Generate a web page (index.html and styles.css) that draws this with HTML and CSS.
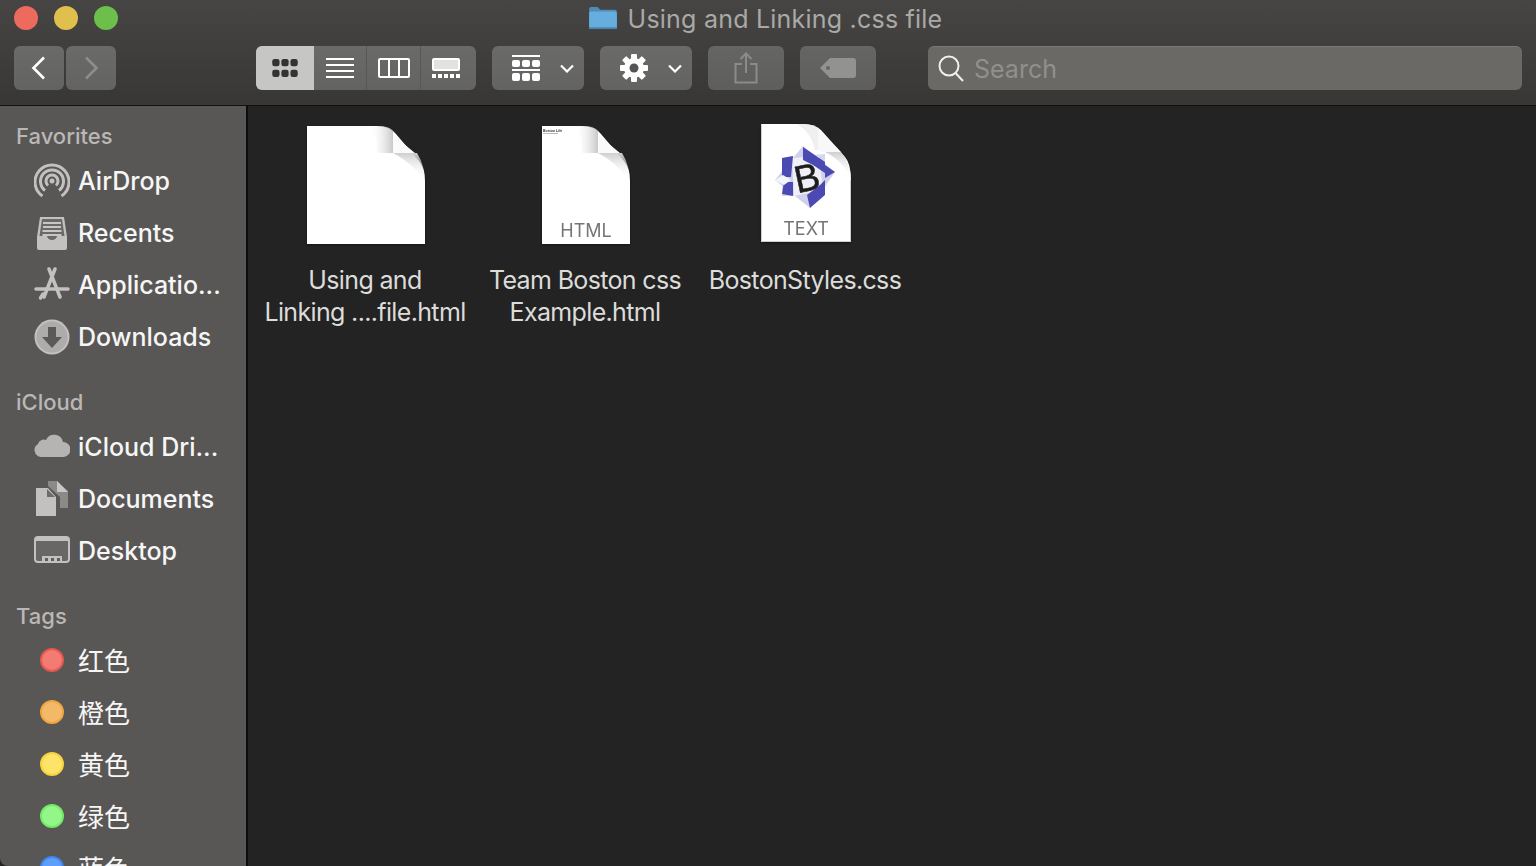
FILE: index.html
```html
<!DOCTYPE html>
<html lang="en">
<head>
    <meta charset="UTF-8">
    <meta name="viewport" content="width=device-width, initial-scale=1.0">
    <title>Using and Linking .css file</title>
    <link rel="stylesheet" href="styles.css">
</head>
<body>
    <div class="window">
        <header class="titlebar">
            <div class="title-row">
                <div class="lights">
                    <span class="light light-red"></span>
                    <span class="light light-yellow"></span>
                    <span class="light light-green"></span>
                </div>
                <div class="title">
                    <svg class="folder" width="30" height="24" viewBox="0 0 32 26">
                        <path d="M1 3a2 2 0 0 1 2-2h7l3 3h16a2 2 0 0 1 2 2v17a2 2 0 0 1-2 2H3a2 2 0 0 1-2-2z" fill="#4f8db8"/>
                        <path d="M1 8a2 2 0 0 1 2-2h26a2 2 0 0 1 2 2v15a2 2 0 0 1-2 2H3a2 2 0 0 1-2-2z" fill="#66aedd"/>
                        <rect x="1" y="23" width="30" height="2" fill="#4a86ad"/>
                    </svg>
                    <span class="title-text">Using and Linking .css file</span>
                </div>
            </div>
            <div class="tools">
                <div class="nav">
                    <button class="btn nav-btn">
                        <svg width="16" height="24" viewBox="0 0 16 24"><path d="M13 1.500 2.500 12 13 22.500" fill="none" stroke="#fff" stroke-width="2.600"/></svg>
                    </button>
                    <button class="btn nav-btn">
                        <svg width="16" height="24" viewBox="0 0 16 24"><path d="M3 1.500 13.500 12 3 22.500" fill="none" stroke="#8d8d8b" stroke-width="2.600"/></svg>
                    </button>
                </div>
                <div class="views">
                    <button class="view view-on">
                        <svg width="28" height="20" viewBox="0 0 30 22" fill="#333">
                            <rect x="1" y="1" width="8" height="8" rx="2.500"/><rect x="11" y="1" width="8" height="8" rx="2.500"/><rect x="21" y="1" width="8" height="8" rx="2.500"/>
                            <rect x="1" y="13" width="8" height="8" rx="2.500"/><rect x="11" y="13" width="8" height="8" rx="2.500"/><rect x="21" y="13" width="8" height="8" rx="2.500"/>
                        </svg>
                    </button>
                    <button class="view view-list">
                        <svg width="28" height="20" viewBox="0 0 28 20" fill="#fff">
                            <rect y="0" width="28" height="2"/><rect y="6" width="28" height="2"/><rect y="12" width="28" height="2"/><rect y="18" width="28" height="2"/>
                        </svg>
                    </button>
                    <button class="view view-cols">
                        <svg width="32" height="20" viewBox="0 0 32 20" fill="none" stroke="#fff" stroke-width="2">
                            <rect x="1" y="1" width="30" height="18" rx="1"/><path d="M11 1v18M21 1v18"/>
                        </svg>
                    </button>
                    <button class="view view-cover">
                        <svg width="28" height="20" viewBox="0 0 28 20">
                            <rect x="1" y="1" width="26" height="11" rx="1" fill="#e2e2e0" stroke="#fff" stroke-width="2"/>
                            <g fill="#fff"><rect y="16" width="4" height="4"/><rect x="6" y="16" width="4" height="4"/><rect x="12" y="16" width="4" height="4"/><rect x="18" y="16" width="4" height="4"/><rect x="24" y="16" width="4" height="4"/></g>
                        </svg>
                    </button>
                </div>
                <button class="btn menu-btn">
                    <svg width="28" height="26" viewBox="0 0 28 26" fill="#fff">
                        <rect width="28" height="2" y="0"/>
                        <rect x="0" y="5" width="8" height="7" rx="2"/><rect x="10" y="5" width="8" height="7" rx="2"/><rect x="20" y="5" width="8" height="7" rx="2"/>
                        <rect width="28" height="2" y="14"/>
                        <rect x="0" y="18" width="8" height="8" rx="2"/><rect x="10" y="18" width="8" height="8" rx="2"/><rect x="20" y="18" width="8" height="8" rx="2"/>
                    </svg>
                    <svg class="chev" width="14" height="9" viewBox="0 0 14 9"><path d="M1 1.500 7 7.500 13 1.500" fill="none" stroke="#fff" stroke-width="2.200"/></svg>
                </button>
                <button class="btn menu-btn">
                    <svg width="28" height="28" viewBox="0 0 28 28" fill="#fff">
                        <g>
                            <rect x="11" y="0" width="6" height="28" rx="1"/>
                            <rect x="11" y="0" width="6" height="28" rx="1" transform="rotate(45 14 14)"/>
                            <rect x="11" y="0" width="6" height="28" rx="1" transform="rotate(90 14 14)"/>
                            <rect x="11" y="0" width="6" height="28" rx="1" transform="rotate(135 14 14)"/>
                        </g>
                        <circle cx="14" cy="14" r="10"/>
                        <circle cx="14" cy="14" r="4.500" fill="#555"/>
                    </svg>
                    <svg class="chev" width="14" height="9" viewBox="0 0 14 9"><path d="M1 1.500 7 7.500 13 1.500" fill="none" stroke="#fff" stroke-width="2.200"/></svg>
                </button>
                <button class="btn plain-btn">
                    <svg width="24" height="32" viewBox="0 0 24 32" fill="none" stroke="#8b8b89" stroke-width="2">
                        <path d="M8 12H1.500v18.500h21V12H16M12 21V2M6.500 7 12 1.500 17.500 7"/>
                    </svg>
                </button>
                <button class="btn plain-btn">
                    <svg width="36" height="20" viewBox="0 0 36 20">
                        <path d="M10 0h23a3 3 0 0 1 3 3v14a3 3 0 0 1-3 3H10L0 10z" fill="#929290"/>
                        <circle cx="8" cy="10" r="2" fill="#666"/>
                    </svg>
                </button>
                <div class="search">
                    <svg width="26" height="28" viewBox="0 0 26 28" fill="none" stroke="#f0f0ee" stroke-width="2">
                        <circle cx="11" cy="11" r="9.500"/><path d="M17.500 18 25 26"/>
                    </svg>
                    <span>Search</span>
                </div>
            </div>
        </header>
        <div class="body">
            <aside class="sidebar">
                <h2 class="side-head">Favorites</h2>
                <div class="side-row">
                    <svg class="side-icon" viewBox="0 0 36 36" fill="none" stroke="#c2c1bf" stroke-width="3">
                        <path d="M8.500 33A17 17 0 1 1 27.500 33"/>
                        <path d="M11 27.500A11.500 11.500 0 1 1 25 27.500"/>
                        <path d="M14 22.500A6 6 0 1 1 22 22.500"/>
                        <circle cx="18" cy="18" r="2.500" fill="#c2c1bf" stroke="none"/>
                    </svg>
                    <span>AirDrop</span>
                </div>
                <div class="side-row">
                    <svg class="side-icon" viewBox="0 0 36 36">
                        <path d="M6 2h24l3 20v11a2 2 0 0 1-2 2H5a2 2 0 0 1-2-2V22z" fill="#c2c1bf"/>
                        <path d="M8 4h20l2.500 17H23a5 4 0 0 1-10 0H5.500z" fill="#6a6967"/>
                        <path d="M9 8h18M9 12h18M8.500 16h19" stroke="#c8c7c5" stroke-width="2"/>
                        <path d="M8.500 20h19" stroke="#c8c7c5" stroke-width="2"/>
                    </svg>
                    <span>Recents</span>
                </div>
                <div class="side-row">
                    <svg class="side-icon" viewBox="0 0 36 36" fill="none" stroke="#c2c1bf" stroke-linecap="round">
                        <path d="M15 2l11 28M21 2 10 30" stroke-width="3.500"/>
                        <path d="M2 22h32" stroke-width="3.500"/>
                        <path d="M6.500 31 9 27" stroke-width="3.500"/>
                    </svg>
                    <span>Applicatio...</span>
                </div>
                <div class="side-row">
                    <svg class="side-icon" viewBox="0 0 36 36">
                        <circle cx="18" cy="18" r="17.500" fill="#c2c1bf"/>
                        <circle cx="18" cy="18" r="15.500" fill="#adacaa"/>
                        <path d="M14 8h8v10h6L18 29 8 18h6z" fill="#5a5957"/>
                    </svg>
                    <span>Downloads</span>
                </div>

                <h2 class="side-head side-head-gap">iCloud</h2>
                <div class="side-row">
                    <svg class="side-icon" viewBox="0 0 36 36">
                        <path d="M7 28A7 7 0 0 1 4 15a6 6 0 0 1 8-4A9 9 0 0 1 29 13a7.500 7.500 0 0 1 0 15z" fill="#b5b4b2"/>
                    </svg>
                    <span>iCloud Dri...</span>
                </div>
                <div class="side-row">
                    <svg class="side-icon" viewBox="0 0 36 36">
                        <path d="M14 0h9l11 10v17h-8V16L14 5z" fill="#8b8a88"/>
                        <path d="M23 0l11 11H23z" fill="#c8c7c5"/>
                        <path d="M2 7h12l8 9v19H2z" fill="#c2c1bf"/>
                        <path d="M13 8l8 8h-8z" fill="#6d6c6a"/>
                    </svg>
                    <span>Documents</span>
                </div>
                <div class="side-row">
                    <svg class="side-icon" viewBox="0 0 36 36">
                        <rect x="1" y="4" width="34" height="25" rx="3" fill="#686765" stroke="#c2c1bf" stroke-width="2"/>
                        <rect x="2" y="5" width="32" height="3" fill="#c2c1bf"/>
                        <rect x="8" y="23" width="20" height="7" fill="#c2c1bf"/>
                        <path d="M11 25h3v3h-3zM17 25h3v3h-3zM23 25h3v3h-3z" fill="#5f5e5c"/>
                    </svg>
                    <span>Desktop</span>
                </div>

                <h2 class="side-head side-head-gap">Tags</h2>
                <div class="side-row tag-row"><span class="tag tag-red"></span><span class="cjk">红色</span></div>
                <div class="side-row tag-row"><span class="tag tag-orange"></span><span class="cjk">橙色</span></div>
                <div class="side-row tag-row"><span class="tag tag-yellow"></span><span class="cjk">黄色</span></div>
                <div class="side-row tag-row"><span class="tag tag-green"></span><span class="cjk">绿色</span></div>
                <div class="side-row tag-row"><span class="tag tag-blue"></span><span class="cjk">蓝色</span></div>
            </aside>
            <main class="files">
                <div class="file">
                    <div class="file-icon">
                        <svg width="118" height="118" viewBox="0 0 118 118">
                            <defs>
                                <linearGradient id="curl2" x1="0" y1="0" x2="0" y2="1">
                                    <stop offset="0" stop-color="#cfcfcf"/><stop offset="1" stop-color="#fff" stop-opacity="0"/>
                                </linearGradient>
                                <linearGradient id="curl3" x1="0" y1="0" x2="1" y2="0">
                                    <stop offset="0" stop-color="#fff" stop-opacity="0"/><stop offset="1" stop-color="#c8c8c8"/>
                                </linearGradient>
                            </defs>
                            <path d="M0 0H70Q82 0 89 8L112 35Q118 42 118 55V118H0Z" fill="#fff"/>
                            <path d="M62 0H72Q82 0 86 5V27H70Q72 10 62 0Z" fill="url(#curl3)"/>
                            <path d="M86 27H110Q118 40 118 55Q104 36 86 27Z" fill="url(#curl2)"/>
                            <path d="M86 9 108 27H88Q86 27 86 25Z" fill="#fafafa"/>
                        </svg>
                    </div>
                    <p class="file-name">Using and<br>Linking ....file.html</p>
                </div>
                <div class="file">
                    <div class="file-icon">
                        <svg width="88" height="118" viewBox="0 0 88 118">
                            <path d="M0 0H40Q52 0 59 8L82 35Q88 42 88 55V118H0Z" fill="#fff"/>
                            <path d="M32 0H42Q52 0 56 5V27H40Q42 10 32 0Z" fill="url(#curl3)"/>
                            <path d="M56 27H80Q88 40 88 55Q74 36 56 27Z" fill="url(#curl2)"/>
                            <path d="M56 9 78 27H58Q56 27 56 25Z" fill="#fafafa"/>
                            <text x="1" y="5.500" class="thumb-title">Boston Life</text>
                            <rect x="1" y="7" width="15" height="1" fill="#bbb"/>
                            <text x="44" y="111" class="doc-label">HTML</text>
                        </svg>
                    </div>
                    <p class="file-name">Team Boston css<br>Example.html</p>
                </div>
                <div class="file">
                    <div class="file-icon file-icon-up">
                        <svg width="90" height="118" viewBox="0 0 90 118">
                            <path d="M0 0H42Q54 0 60 6L84 33Q90 40 90 56V118H0Z" fill="#fff"/>
                            <path d="M42 0Q54 0 58 6V26H54Q50 8 36 0Z" fill="#f0f0f0"/>
                            <path d="M57 4 80 28H62Q57 28 57 22Z" fill="#f8f8f8"/>
                            <path d="M64 28H80Q90 40 90 56Q84 38 64 28Z" fill="url(#curl2)"/>
                            <path d="M.500.500V117.500H89.500V56" fill="none" stroke="#cfcfcf"/>
                            <g transform="translate(18 16)">
                                <path d="M3 18 46 14 46 55 3 56Z" fill="#d6d6ec"/>
                                <path d="M24 6 56 32 31 68-4 40Z" fill="#d0d0ea"/>
                                <path d="M13 18 40 16 44 50 15 56Z" fill="#efeff8"/>
                                <path d="M24 7 46 22 46 33 34 25 24 20ZM46 25 56 32 46 38ZM46 40 46 55 31 68 28 55 41 45ZM3 18 14 16 12 37 3 37ZM5 42 14 42 14 56 3 54Z" fill="#4a4ab2"/>
                                <path d="M-4 40 4 35 12 40 5 45Z" fill="#f4f4fb"/>
                                <text x="28" y="51" class="bb-letter" transform="rotate(-12 28 38)">B</text>
                            </g>
                            <text x="45" y="111" class="doc-label">TEXT</text>
                        </svg>
                    </div>
                    <p class="file-name">BostonStyles.css</p>
                </div>
            </main>
        </div>
    </div>
</body>
</html>
```

FILE: styles.css
```css
* {
    box-sizing: border-box;
}

html, body {
    margin: 0;
    height: 100%;
    overflow: hidden;
    background: #232323;
}

.window {
    display: flex;
    flex-direction: column;
    height: 866px;
    font-family: Inter, "Noto Sans", "Noto Sans CJK SC", sans-serif;
    font-size: 25px;
}

/* title bar + toolbar */
.titlebar {
    height: 106px;
    padding: 0 14px;
    background: linear-gradient(#464543, #383735);
    border-bottom: 1px solid #111;
}

.title-row {
    display: grid;
    grid-template-columns: 1fr auto 1fr;
    align-items: center;
    height: 36px;
}

.lights {
    display: flex;
    gap: 16px;
}

.light {
    width: 24px;
    height: 24px;
    border-radius: 50%;
}

.light-red { background: #ec6a5e; }
.light-yellow { background: #e0bf4c; }
.light-green { background: #6dbf4b; }

.title {
    display: flex;
    align-items: center;
    gap: 10px;
    margin-right: 6px;
    color: #a9a9a7;
}

.title-text {
    padding-top: 2px;
    letter-spacing: 0.22px;
}

.tools {
    display: flex;
    gap: 16px;
    height: 44px;
    margin-top: 10px;
}

.btn {
    display: flex;
    align-items: center;
    justify-content: center;
    height: 44px;
    padding: 0;
    border: 0;
    border-radius: 6px;
    background: linear-gradient(#6a6a68, #636361);
}

.nav {
    display: flex;
    gap: 2px;
    margin-right: 124px;
}

.nav-btn {
    width: 50px;
}

.views {
    display: flex;
    width: 220px;
    border-radius: 6px;
    overflow: hidden;
    background: linear-gradient(#6a6a68, #636361);
}

.view {
    display: flex;
    align-items: center;
    justify-content: center;
    padding: 0;
    border: 0;
    background: none;
}

.view-on {
    width: 58px;
    background: #c6c6c4;
}

.view-list {
    width: 53px;
    border-right: 1px solid #575755;
}

.view-cols {
    width: 54px;
    border-right: 1px solid #575755;
}

.view-cover {
    width: 55px;
    padding-right: 5px;
}

.menu-btn {
    gap: 20px;
    width: 92px;
    padding-left: 9px;
}

.plain-btn {
    width: 76px;
    background: linear-gradient(#656563, #5e5e5c);
}

.search {
    display: flex;
    flex: 1;
    align-items: center;
    gap: 10px;
    margin-left: 36px;
    padding-left: 10px;
    border-radius: 6px;
    border-top: 1px solid #7a7a78;
    background: #6a6966;
    color: #90908e;
}

/* main area */
.body {
    display: flex;
    flex: 1;
    min-height: 0;
}

.sidebar {
    flex: none;
    width: 248px;
    padding-top: 11px;
    overflow: hidden;
    border-right: 2px solid #0c0c0c;
    border-bottom-left-radius: 8px;
    background: #595755;
    color: #f6f6f6;
}

.side-head {
    height: 38px;
    margin: 0;
    padding-left: 16px;
    font-size: 22px;
    font-weight: 500;
    line-height: 38px;
    color: #b9b8b6;
}

.side-head-gap {
    margin-top: 20px;
}

.side-row {
    display: flex;
    align-items: center;
    gap: 8px;
    height: 52px;
    padding-left: 34px;
    font-weight: 500;
}

.side-icon {
    flex: none;
    width: 36px;
    height: 36px;
}

.tag-row {
    gap: 14px;
    padding-left: 40px;
}

.tag {
    flex: none;
    width: 24px;
    height: 24px;
    margin-bottom: 2px;
    border-radius: 50%;
    border: 2px solid;
}

.tag-red { background: #f27c74; border-color: #e8574c; }
.tag-orange { background: #f4b968; border-color: #f0a53f; }
.tag-yellow { background: #fde367; border-color: #f6d23e; }
.tag-green { background: #93f688; border-color: #72ea68; }
.tag-blue { background: #5f9ffb; border-color: #3d88f5; }

.cjk {
    margin-bottom: 4px;
    font-family: "Noto Sans CJK SC", sans-serif;
    font-size: 26px;
    font-weight: 400;
}

.files {
    display: flex;
    flex: 1;
    align-items: flex-start;
    padding: 18px 0 0 7px;
    background: #232323;
}

.file {
    width: 220px;
    text-align: center;
}

.file-icon {
    display: flex;
    align-items: flex-end;
    justify-content: center;
    height: 120px;
    padding-left: 2px;
}

.file-icon svg {
    filter: drop-shadow(0 1px 1px rgba(0, 0, 0, 0.4));
}

.file-icon-up {
    padding-bottom: 2px;
}

.file-name {
    margin: 20px 0 0;
    font-size: 25px;
    line-height: 32px;
    letter-spacing: -0.65px;
    color: #dcdcda;
}

.doc-label {
    font-family: Inter, sans-serif;
    font-size: 18px;
    text-anchor: middle;
    fill: #757575;
}

.thumb-title {
    font-family: "Liberation Sans", sans-serif;
    font-size: 3.5px;
    font-weight: 700;
    fill: #333;
}

.bb-letter {
    font-family: "Liberation Sans", sans-serif;
    font-size: 38px;
    text-anchor: middle;
    fill: #1c1c1c;
    stroke: #1c1c1c;
    stroke-width: 0.5px;
}
```
